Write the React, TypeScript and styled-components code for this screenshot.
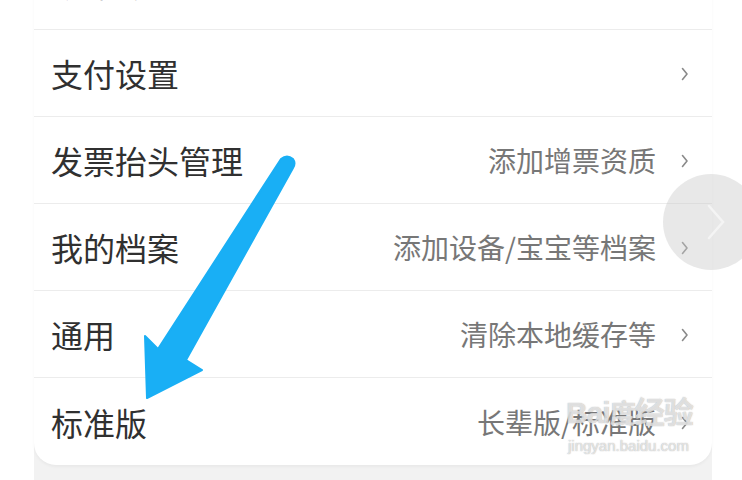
import React from 'react';
import styled, { createGlobalStyle } from 'styled-components';

type Row = {
  label: string;
  value?: string;
};

const rows: Array<Row> = [
  { label: '账号与安全', value: '手机号、密码、实名认证' },
  { label: '支付设置' },
  { label: '发票抬头管理', value: '添加增票资质' },
  { label: '我的档案', value: '添加设备/宝宝等档案' },
  { label: '通用', value: '清除本地缓存等' },
  { label: '标准版', value: '长辈版/标准版' },
];

const Chevron: React.FC = () => (
  <ChevronIcon viewBox="0 0 10 16" aria-hidden>
    <path d="M2.5 2.5 L7 8 L2.5 13.5" fill="none" stroke="#8a8a8a" strokeWidth="1.6" strokeLinecap="round" strokeLinejoin="round" />
  </ChevronIcon>
);

const App: React.FC = () => {
  return (
    <>
      <GlobalStyle />
      <Page>
        <Card>
          {rows.map(({ label, value }, i) => (
            <Item key={label} $last={i === rows.length - 1}>
              <Label>{label}</Label>
              <Right>
                {value && <Value>{value}</Value>}
                <Chevron />
              </Right>
            </Item>
          ))}
        </Card>
        <Footer />

        <FloatButton>
          <svg width="22" height="40" viewBox="0 0 22 40">
            <path d="M4 4 L18 20 L4 36" fill="none" stroke="#f4f4f4" strokeWidth="2.5" strokeLinecap="round" />
          </svg>
        </FloatButton>

        <Arrow viewBox="0 0 742 480">
          <path
            d="M281 159 Q287 154 293 159 Q296 163 293 168 L186 360 L202 370 L147 398 L145 336 L158 349 Z"
            fill="#19aff5"
            stroke="#19aff5"
            strokeWidth="2"
            strokeLinejoin="round"
          />
        </Arrow>

        <Watermark>
          <Brand>
            Bai<span>度</span>经验
          </Brand>
          <Site>jingyan.baidu.com</Site>
        </Watermark>
      </Page>
    </>
  );
};

const GlobalStyle = createGlobalStyle`
  html, body {
    margin: 0;
    padding: 0;
    background: #fff;
  }
  body {
    font-family: 'Noto Sans CJK SC', 'Noto Sans', sans-serif;
  }
`;

const Page = styled.div`
  position: relative;
  width: 742px;
  height: 480px;
  overflow: hidden;
  background: #fff;
  padding: 0 30px 0 34px;
  box-sizing: border-box;
`;

const Card = styled.div`
  margin-top: -57px;
  background: #fff;
  border-radius: 0 0 22px 22px;
  box-shadow: 0 2px 3px rgba(0, 0, 0, 0.04);
  position: relative;
  z-index: 1;
`;

const Footer = styled.div`
  margin-top: -22px;
  height: 60px;
  background: #f2f2f2;
`;

const Item = styled.div<{ $last: boolean }>`
  height: 87px;
  box-sizing: border-box;
  display: flex;
  align-items: center;
  justify-content: space-between;
  padding: ${({ $last }) => ($last ? '0 22px 0 17px' : '0 22px 0 17px')};
  border-bottom: ${({ $last }) => ($last ? 'none' : '1px solid #ececec')};

  &:first-child {
    padding-bottom: 6px;
  }
`;

const Label = styled.span`
  font-size: 32px;
  color: #303030;
`;

const Right = styled.div`
  display: flex;
  align-items: center;
  gap: 24px;
`;

const Value = styled.span`
  font-size: 28px;
  color: #777;
`;

const ChevronIcon = styled.svg`
  width: 10px;
  height: 16px;
  margin-top: 2px;
`;

const FloatButton = styled.div`
  position: absolute;
  left: 663px;
  top: 174px;
  width: 96px;
  height: 96px;
  border-radius: 50%;
  background: rgba(200, 200, 200, 0.42);
  display: flex;
  align-items: center;
  padding-left: 42px;
  box-sizing: border-box;
  z-index: 3;
`;

const Arrow = styled.svg`
  position: absolute;
  left: 0;
  top: 0;
  width: 742px;
  height: 480px;
  z-index: 4;
  pointer-events: none;
`;

const Watermark = styled.div`
  position: absolute;
  left: 566px;
  top: 398px;
  z-index: 5;
  color: rgba(255, 255, 255, 0.6);
  text-shadow: 0 0 1px rgba(150, 150, 150, 0.5), 0 0 1px rgba(150, 150, 150, 0.5);
  font-family: 'Liberation Sans', 'Noto Sans CJK SC', sans-serif;
  line-height: 1;
`;

const Brand = styled.div`
  font-size: 30px;
  font-weight: bold;
  letter-spacing: -1px;

  span {
    font-size: 26px;
  }
`;

const Site = styled.div`
  margin-top: 10px;
  margin-left: 2px;
  font-size: 15px;
`;

export default App;
